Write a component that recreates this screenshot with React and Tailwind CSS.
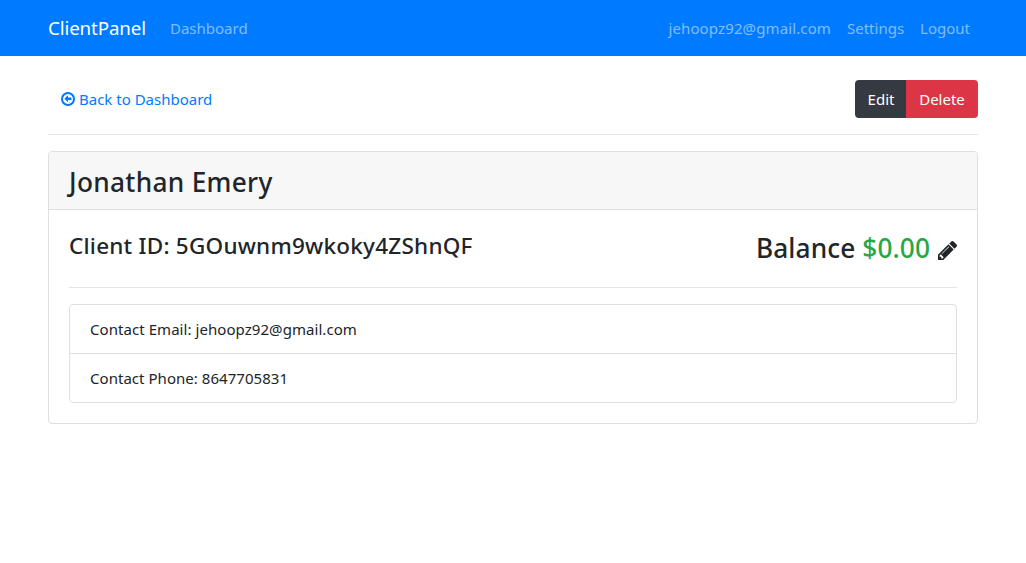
function ArrowCircleLeft() {
  return (
    <svg className="h-[14px] w-[14px] shrink-0" viewBox="0 -1408 1536 1536" fill="currentColor" aria-hidden="true">
      <path
        transform="scale(1 -1)"
        d="M1152 704v-128q0 -13 -9.5 -22.5t-22.5 -9.5h-352v-192q0 -14 -9 -23t-23 -9q-12 0 -24 10l-319 319q-9 9 -9 23t9 23l320 320q9 9 23 9q13 0 22.5 -9.5t9.5 -22.5v-192h352q13 0 22.5 -9.5t9.5 -22.5zM1312 640q0 148 -73 273t-198 198t-273 73t-273 -73t-198 -198t-73 -273t73 -273t198 -198t273 -73t273 73t198 198t73 273zM1536 640q0 -209 -103 -385.5t-279.5 -279.5t-385.5 -103t-385.5 103t-279.5 279.5t-103 385.5t103 385.5t279.5 279.5t385.5 103t385.5 -103t279.5 -279.5t103 -385.5z"
      />
    </svg>
  );
}

function Pencil() {
  return (
    <svg className="mt-[5px] h-[19px] w-[19px] shrink-0" viewBox="0 -1387 1515 1515" fill="currentColor" aria-hidden="true">
      <path
        transform="scale(1 -1)"
        d="M363 0l91 91l-235 235l-91 -91v-107h128v-128h107zM886 928q0 22 -22 22q-10 0 -17 -7l-542 -542q-7 -7 -7 -17q0 -22 22 -22q10 0 17 7l542 542q7 7 7 17zM832 1120l416 -416l-832 -832h-416v416zM1515 1024q0 -53 -37 -90l-166 -166l-416 416l166 165q36 38 90 38q53 0 91 -38l235 -234q37 -39 37 -91z"
      />
    </svg>
  );
}

export default function App() {
  return (
    <div className="min-h-screen bg-white font-['Noto_Sans','Open_Sans',sans-serif] text-[15px] leading-6 text-[#212529]">
      <nav className="flex h-14 items-center bg-[#007bff] px-12 text-white/50">
        <a href="#" className="w-[98px] whitespace-nowrap text-[18.75px] leading-[30px] tracking-[-0.12px] text-white">ClientPanel</a>
        <a href="#" className="ml-6 whitespace-nowrap">Dashboard</a>
        <div className="ml-auto flex gap-4 pr-2 whitespace-nowrap">
          <a href="#" className="tracking-[0.12px]">jehoopz92@gmail.com</a>
          <a href="#">Settings</a>
          <a href="#">Logout</a>
        </div>
      </nav>

      <main className="px-12 pt-6">
        <div className="flex h-[38px] items-center justify-between">
          <a href="#" className="flex items-center gap-1 pl-[13px] whitespace-nowrap text-[#007bff]">
            <ArrowCircleLeft />
            <span>Back to Dashboard</span>
          </a>
          <div className="flex h-[38px] overflow-hidden rounded-[4px] text-white">
            <button className="w-[51px] bg-[#343a40] pl-px">Edit</button>
            <button className="w-[72px] bg-[#dc3545]">Delete</button>
          </div>
        </div>

        <hr className="my-4 border-t border-[#e5e5e5]" />

        <section className="overflow-hidden rounded-[4px] border border-[#dfdfdf]">
          <header className="flex h-[58px] items-center border-b border-[#dfdfdf] bg-[#f7f7f7] px-5 pt-[3px]">
            <h3 className="text-[26.25px] leading-[34px] font-medium tracking-[0.3px] whitespace-nowrap">Jonathan Emery</h3>
          </header>
          <div className="p-5">
            <div className="flex h-[41px] items-start justify-between whitespace-nowrap">
              <h4 className="mt-px text-[22.5px] leading-[29px] font-medium tracking-[0.23px]">Client ID: 5GOuwnm9wkoky4ZShnQF</h4>
              <h3 className="mt-px flex items-center gap-2 text-[26.25px] leading-[34px] font-medium tracking-[0.1px]">
                <span>
                  Balance <span className="text-[#28a745]">$0.00</span>
                </span>
                <Pencil />
              </h3>
            </div>
            <hr className="my-4 border-t border-[#e5e5e5]" />
            <ul className="rounded-[4px] border border-[#dfdfdf]">
              <li className="border-b border-[#dfdfdf] px-5 py-3 tracking-[0.06px]">Contact Email: jehoopz92@gmail.com</li>
              <li className="px-5 py-3 tracking-[0.04px]">Contact Phone: 8647705831</li>
            </ul>
          </div>
        </section>
      </main>
    </div>
  );
}
